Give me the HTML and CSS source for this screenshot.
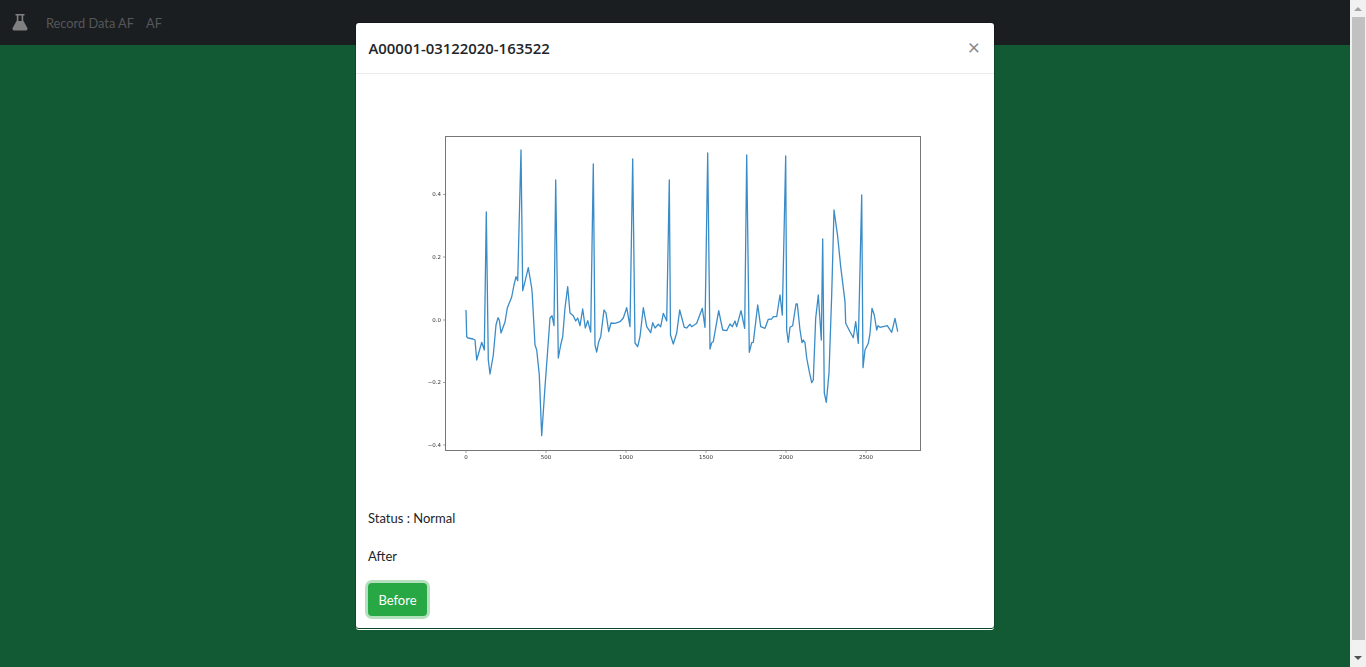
FILE: index.html
```html
<!DOCTYPE html>
<html lang="en">
<head>
    <meta charset="UTF-8">
    <meta name="viewport" content="width=device-width, initial-scale=1.0">
    <title>Record Data AF</title>
    <link rel="stylesheet" href="styles.css">
</head>
<body>
    <div class="page">
        <nav class="navbar">
            <svg class="brand-icon" viewBox="0 0 16 18" aria-hidden="true">
                <path d="M3.5 1h9v1.600h-1.300v4.900l4.200 7.600c.5 1-.2 2.400-1.400 2.400H2c-1.200 0-1.900-1.400-1.400-2.400l4.200-7.600V2.600H3.500z M6.400 2.600v5.400h3.200V2.600z" fill-rule="evenodd"/>
            </svg>
            <a class="nav-link" href="#">Record Data AF</a>
            <a class="nav-link" href="#">AF</a>
        </nav>
    </div>

    <!-- Barra de scroll -->
    <div class="scrollbar">
        <span class="arrow-up"></span>
        <span class="thumb"></span>
        <span class="arrow-down"></span>
    </div>

    <!-- Modal -->
    <div class="modal">
        <div class="modal-header">
            <h5 class="modal-title">A00001-03122020-163522</h5>
            <span class="close">&times;</span>
        </div>
        <div class="modal-body">
            <svg class="chart" viewBox="368 90 614 410">
                <rect class="axes" x="445.500" y="136.500" width="475" height="314"/>
                <g class="ticks">
                    <path d="M443 194.500h2.500M443 257h2.500M443 320h2.500M443 382.500h2.500M443 445h2.500"/>
                    <path d="M466 451v2M546 451v2M626 451v2M706 451v2M786 451v2M866 451v2"/>
                </g>
                <g class="tick-y">
                    <text x="441" y="196">0.4</text>
                    <text x="441" y="258.500">0.2</text>
                    <text x="441" y="321.500">0.0</text>
                    <text x="441" y="384">&minus;0.2</text>
                    <text x="441" y="446.500">&minus;0.4</text>
                </g>
                <g class="tick-x">
                    <text x="466" y="458.500">0</text>
                    <text x="546" y="458.500">500</text>
                    <text x="626" y="458.500">1000</text>
                    <text x="706" y="458.500">1500</text>
                    <text x="786" y="458.500">2000</text>
                    <text x="866" y="458.500">2500</text>
                </g>
                <polyline class="signal" points="466,310 466.700,336.700 468,338 473,339 475,340 476.700,360 479,352 481.700,342.300 484.300,350 486.300,212 488.300,360 490,374 493.300,355 496,325 498,317.700 499.300,320 501,333 505,322 507.300,308 511.700,297 514,285 516,276.700 517.700,280.700 521,150 522.700,290.700 525,281.700 528.300,267.700 531.700,288 532.300,295 535,345 536.700,350 539.300,375 541.700,435.700 545,386.700 547.700,350 550,318 552,315.700 554,325.700 555.700,180 558.300,358 560.700,345 562.700,336.700 565,308 567.700,286.700 570,313 573.300,315.700 575.700,321 577.700,318 580,325.700 582.700,309 585.300,328 587.700,320.700 590.700,332 593.300,164 595,345 596.700,352 598.700,341.700 600.700,336.700 604,310 606,313 608.700,331.700 611,323 615,323.300 620,321.700 623.300,318 626.700,307.700 630,326.700 632.700,159 635,343 637.700,346.700 640,336.700 643.300,307.700 646.700,326.700 650.700,332.700 652.700,322.700 655,328 658.300,324.300 660.700,326.700 663.300,313.300 666.700,321 669.300,180 670.500,335 673.300,344 676.700,333 679.700,310 684.300,327.300 686.700,328 690,324.300 691.700,326.700 696.700,323.300 702.300,308.300 705,327.300 707.700,153 710,349 711.700,342.700 713.300,341.700 718.700,310.700 722.700,330 726.700,330.700 730,324 732.300,326.700 735,321 736.700,326.700 741,310.700 744.700,328.300 746.700,155 749.300,352.300 751.700,342.700 753.300,342.300 757.700,305 760.700,326.700 765,328.300 768.300,319.300 771.700,319 773.300,316.700 776.700,316.700 777.700,310 780,295 782.300,315 785.700,156 786.700,330 788.300,342.300 790,327.300 792.700,325.700 796,304 797.300,304 800,330 802,342.700 803.300,340 805,342.700 806.700,358 809.300,371.700 811.700,382.700 813.300,380 815.700,318.300 818.300,295 821.300,340 822.700,239 824.300,393 826.300,402.300 829,373 831.700,295 834,210 837.700,236.700 840.700,266.700 845,301.700 845.700,323.300 850,331.700 853.300,337.700 855.700,321.700 858.300,343.300 861.700,195 863,367.700 865,350 868.300,343.300 870,333.300 872,308.300 874.300,315 876.700,330 878,325.700 880,327.300 887.300,325.700 891.700,332.300 895,318.300 897.700,331.700"/>
            </svg>
            <p class="status">Status : Normal</p>
            <p class="label">After</p>
            <button class="btn-before">Before</button>
        </div>
    </div>
</body>
</html>
```

FILE: styles.css
```css
/* Estilo general */
html, body {
    height: 100%;
}

body {
    margin: 0;
    display: flex;
    overflow: hidden;
    background-color: #125a33;
    font-family: 'Lato', 'Open Sans', sans-serif;
    font-size: 13px;
    line-height: 21.6px;
    color: #212529;
}

.page {
    flex: 1;
}

/* Barra superior */
.navbar {
    height: 45px;
    display: flex;
    align-items: center;
    padding-left: 12px;
    background-color: #1b1e21;
}

.brand-icon {
    width: 16px;
    height: 18px;
    margin-right: 18px;
    margin-top: -1px;
    fill: #808080;
}

.nav-link {
    margin-top: 2px;
    margin-right: 12px;
    color: #555759;
    text-decoration: none;
    font-size: 12.8px;
}

/* Barra de scroll */
.scrollbar {
    width: 16px;
    display: flex;
    flex-direction: column;
    align-items: center;
    background-color: #f1f1f1;
}

.thumb {
    flex: 1;
    width: 13px;
    background-color: #c1c1c1;
}

.arrow-up,
.arrow-down {
    width: 0;
    height: 0;
    border-left: 4px solid transparent;
    border-right: 4px solid transparent;
}

.arrow-up {
    margin: 7px 0 6px;
    border-bottom: 4px solid #a3a3a3;
}

.arrow-down {
    margin: 16px 0 7px;
    border-top: 4px solid #505050;
}

/* Modal */
.modal {
    position: absolute;
    top: 23px;
    left: 356px;
    width: 638px;
    height: 605px;
    background-color: #fff;
    border-radius: 3px;
    box-shadow: 0 1px 0 0 #0c4526, 0 2px 0 0 #fff, 0 0 0 1px rgba(0, 0, 0, 0.2);
}

.modal-header {
    height: 51px;
    box-sizing: border-box;
    display: flex;
    justify-content: space-between;
    align-items: center;
    padding: 1px 14px 0 12.5px;
    border-bottom: 1px solid #e9ecef;
}

.modal-title {
    margin: 0;
    font-family: 'Open Sans', sans-serif;
    font-size: 14.9px;
    font-weight: 600;
    color: #212529;
}

.close {
    margin-top: -5px;
    font-size: 21px;
    line-height: 1;
    color: #888;
}

.modal-body {
    padding: 16px 12px;
}

.chart {
    display: block;
    width: 614px;
    height: 410px;
    filter: blur(0.6px);
}

.axes {
    fill: #fff;
    stroke: #777;
    stroke-width: 1;
}

.ticks path {
    fill: none;
    stroke: #666;
    stroke-width: 0.6;
}

.tick-y text,
.tick-x text {
    font-family: 'DejaVu Sans', sans-serif;
    font-size: 5.5px;
    fill: #333;
}

.tick-y text {
    text-anchor: end;
}

.tick-x text {
    text-anchor: middle;
}

.signal {
    fill: none;
    stroke: #3a8cc8;
    stroke-width: 1.3;
    stroke-linejoin: round;
}

.status,
.label {
    margin: 0 0 16px;
}

.status {
    margin-top: 8px;
}

/* Boton "Before" */
.btn-before {
    display: block;
    width: 59px;
    height: 33px;
    margin-top: 16px;
    padding: 0;
    border: none;
    border-radius: 4px;
    background-color: #28a745;
    box-shadow: 0 0 0 3px rgba(40, 167, 69, 0.35);
    color: #fff;
    font-family: inherit;
    font-size: 13px;
}
```
